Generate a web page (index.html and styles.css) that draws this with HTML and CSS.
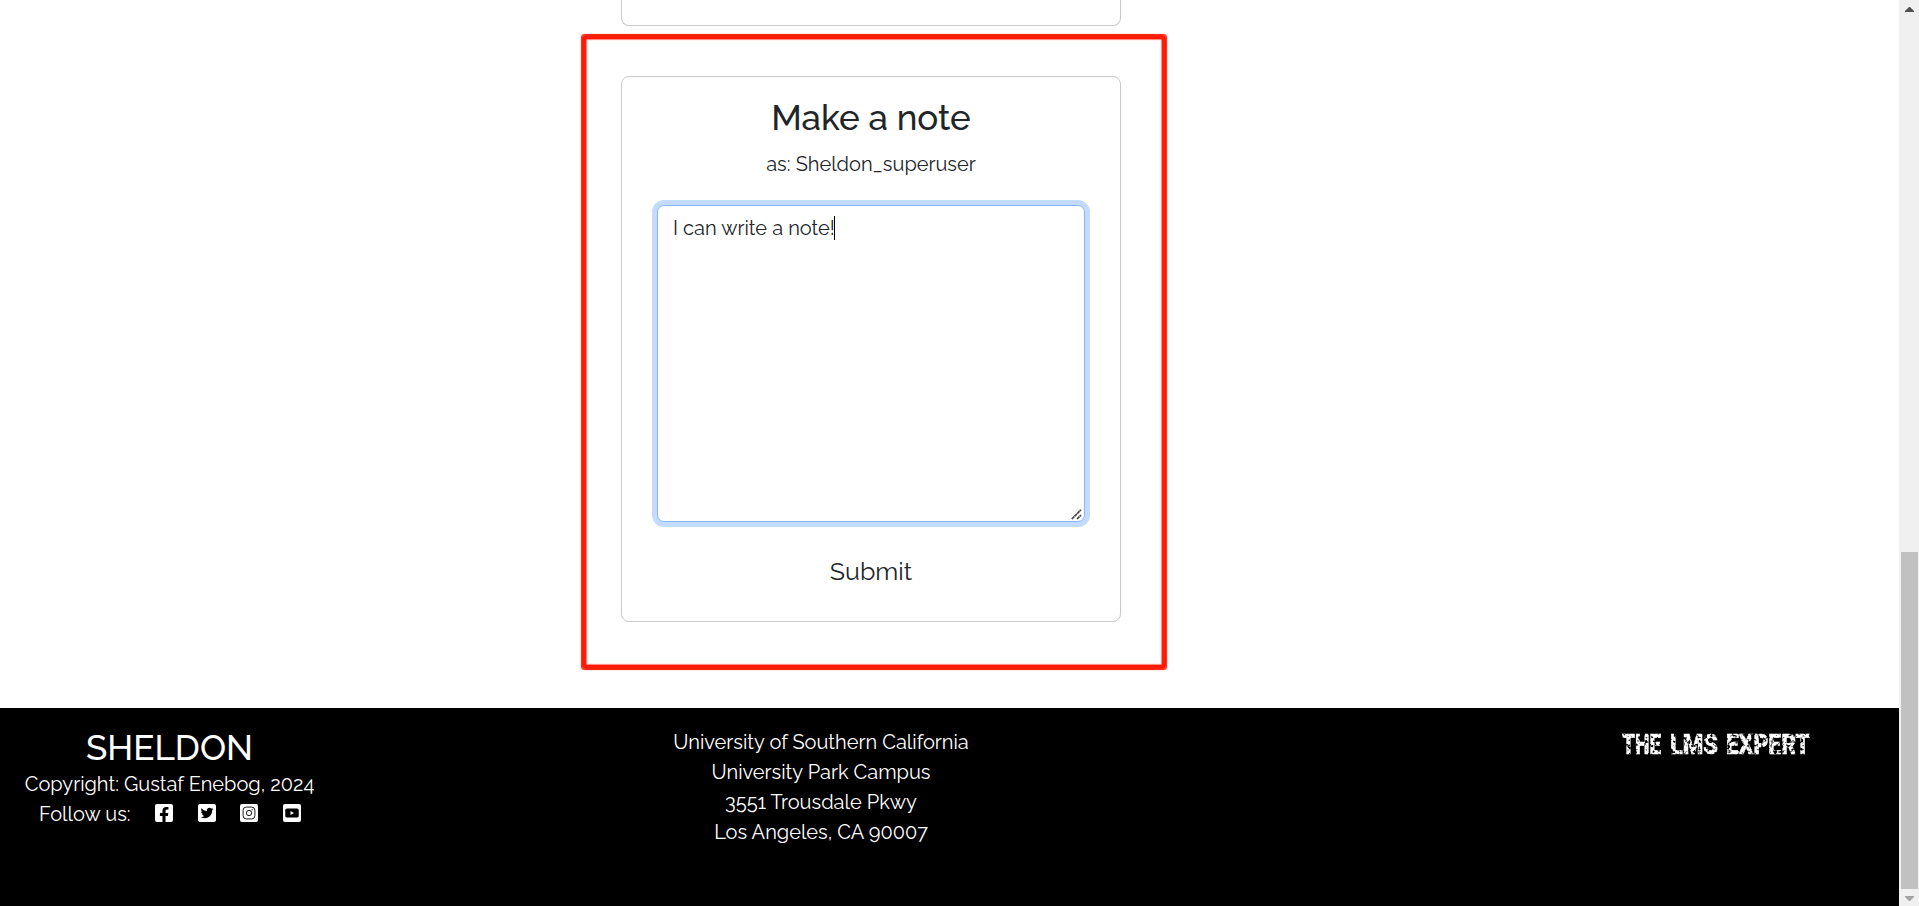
FILE: index.html
```html
<!DOCTYPE html>
<html lang="en">
<head>
<meta charset="utf-8">
<title>Sheldon</title>
<link rel="stylesheet" href="styles.css">
</head>
<body>
<div class="window">
  <div class="page">
    <main class="content">
      <section class="card card-previous"></section>
      <section class="card note-card">
        <h2 class="note-title">Make a note</h2>
        <p class="note-author">as: Sheldon_superuser</p>
        <div class="note-field">
          <textarea class="note-input" spellcheck="false">I can write a note!</textarea>
          <span class="caret"></span>
          <svg class="grip" viewBox="0 0 11 11"><path d="M.8 10 10 .8M6 10l4-4" fill="none" stroke="#444" stroke-width="1.7" stroke-dasharray="3.4 .4"/></svg>
        </div>
        <button class="submit">Submit</button>
      </section>
      <div class="highlight"></div>
    </main>
    <footer class="footer">
      <div class="brand">
        <h3 class="brand-name">SHELDON</h3>
        <p class="copyright">Copyright: Gustaf Enebog, 2024</p>
        <div class="social">
          <span class="social-label">Follow us:</span>
          <svg class="icon" viewBox="0 32 448 448"><path fill="#fff" d="M400 32H48A48 48 0 0 0 0 80v352a48 48 0 0 0 48 48h137.25V327.69h-63V256h63v-54.64c0-62.15 37-96.48 93.67-96.48 27.14 0 55.52 4.84 55.52 4.84v61h-31.27c-30.81 0-40.42 19.12-40.42 38.73V256h68.78l-11 71.69h-57.78V480H400a48 48 0 0 0 48-48V80a48 48 0 0 0-48-48z"/></svg>
          <svg class="icon" viewBox="0 32 448 448"><path fill="#fff" d="M400 32H48C21.5 32 0 53.5 0 80v352c0 26.5 21.5 48 48 48h352c26.5 0 48-21.5 48-48V80c0-26.5-21.5-48-48-48zm-48.9 158.8c.2 2.8.2 5.7.2 8.5 0 86.7-66 186.6-186.6 186.6-37.2 0-71.7-10.8-100.7-29.4 5.3.6 10.4.8 15.8.8 30.7 0 58.9-10.4 81.4-28-28.8-.6-53-19.5-61.3-45.5 10.1 1.5 19.2 1.5 29.6-1.2-30-6.1-52.5-32.5-52.5-64.4v-.8c8.7 4.9 18.9 7.9 29.6 8.3a65.447 65.447 0 0 1-29.2-54.6c0-12.2 3.2-23.4 8.9-33.1 32.3 39.8 80.8 65.8 135.2 68.6-9.3-44.5 24-80.6 64-80.6 18.9 0 35.9 7.9 47.9 20.7 14.8-2.8 29-8.3 41.6-15.8-4.9 15.2-15.2 28-28.8 36.1 13.2-1.4 26-5.1 37.8-10.2-8.9 13.1-20.1 24.7-32.9 34z"/></svg>
          <svg class="icon" viewBox="0 0 448 448"><rect width="448" height="448" rx="48" fill="#fff"/><g fill="none" stroke="#000" stroke-width="22"><rect x="77" y="77" width="294" height="294" rx="78"/><circle cx="224" cy="224" r="66"/></g><circle cx="302" cy="146" r="17"/></svg>
          <svg class="icon" viewBox="0 0 448 448"><rect width="448" height="448" rx="48" fill="#fff"/><rect x="56" y="110" width="336" height="228" rx="46"/><path d="M187 176v96l88-48z" fill="#fff"/></svg>
        </div>
      </div>
      <address class="address">
        <span>University of Southern California</span>
        <span>University Park Campus</span>
        <span>3551 Trousdale Pkwy</span>
        <span>Los Angeles, CA 90007</span>
      </address>
      <div class="partner">
        <svg class="partner-logo" viewBox="0 0 200 40">
          <defs>
            <filter id="worn" x="-2%" y="-10%" width="104%" height="120%">
              <feTurbulence type="fractalNoise" baseFrequency=".3" numOctaves="2" seed="11"/>
              <feColorMatrix values="0 0 0 0 0  0 0 0 0 0  0 0 0 0 0  0 0 0 -5 3.6" result="wear"/>
              <feComposite in="SourceGraphic" in2="wear" operator="in"/>
            </filter>
          </defs>
          <g class="partner-text" filter="url(#worn)">
            <text x="1" y="29.5" textLength="39" lengthAdjust="spacingAndGlyphs">THE</text>
            <text x="49" y="29.5" textLength="48" lengthAdjust="spacingAndGlyphs">LMS</text>
            <text x="105" y="29.5" textLength="84" lengthAdjust="spacingAndGlyphs">EXPERT</text>
          </g>
        </svg>
      </div>
    </footer>
  </div>
  <div class="scrollbar">
    <svg class="arrow" viewBox="0 0 9 5"><path d="M4 0h1L9 4v1H0V4z" fill="#505050"/></svg>
    <div class="thumb"></div>
    <svg class="arrow" viewBox="0 0 9 5"><path d="M0 0h9v1L5 5H4L0 1z" fill="#a3a3a3"/></svg>
  </div>
</div>
</body>
</html>
```

FILE: styles.css
```css
* { box-sizing: border-box; }
body {
  margin: 0;
  background: #fff;
  color: #212529;
  font: 20px/30px Raleway, Lato, sans-serif;
  overflow: hidden;
}
h2, h3, p { margin: 0; font-weight: 500; }
p { font-weight: 400; }
svg { display: block; }

.window { display: grid; grid-template-columns: 1899px 20px; height: 906px; }
.page { display: flex; flex-direction: column; }

.content { position: relative; height: 708px; padding-left: 621px; }
.card { width: 500px; border: 1px solid #cacaca; border-radius: 8px; text-align: center; }
.card-previous { height: 26px; border-top: 0; border-radius: 0 0 8px 8px; }
.note-card { height: 546px; margin-top: 50px; padding: 20px 35px 0; }
.note-title { font-size: 35px; line-height: 42px; }
.note-author { margin-top: 10px; }
.note-field { position: relative; height: 317px; margin-top: 26px; }
.note-input {
  display: block;
  width: 428px;
  height: 317px;
  padding: 7px 15px;
  border: 1px solid #86b7fe;
  border-radius: 7px;
  outline: 0;
  box-shadow: 0 0 0 5px #c2dbfe;
  color: #212529;
  font: inherit;
  resize: none;
}
.caret { position: absolute; left: 177px; top: 11px; width: 1px; height: 24px; background: #000; }
.grip { position: absolute; right: 3px; bottom: 2px; width: 11px; height: 11px; }
.submit {
  display: block;
  margin: 30px auto 0;
  padding: 0;
  border: 0;
  background: none;
  color: #212529;
  font: 25px/38px Raleway, Lato, sans-serif;
}
.highlight {
  position: absolute;
  left: 582px;
  top: 35px;
  width: 584px;
  height: 634px;
  border: 4px solid #ff1c05;
  border-radius: 3px;
  box-shadow: 0 0 1px 0.5px #ff1c05, inset 0 0 1px 0.5px #ff1c05;
}

.footer {
  flex: 1;
  display: grid;
  grid-template-columns: 339px 964px 230px 366px;
  padding-top: 19px;
  background: #000;
  color: #fff;
  text-align: center;
}
.brand-name { font-size: 35px; line-height: 42px; }
.social { display: flex; align-items: center; padding-left: 38px; gap: 24.8px; }
.social-label { width: 92px; text-align: left; padding-left: 1px; white-space: nowrap; }
.icon { width: 18px; height: 18px; margin-bottom: 2px; }
.address { display: flex; flex-direction: column; font-style: normal; }
.partner { grid-column: 4; padding-left: 88px; margin-top: -3px; }
.partner-logo { width: 200px; height: 40px; }
.partner-text { fill: #fff; stroke: #fff; stroke-width: .5; font: 900 27px Roboto, sans-serif; }

.scrollbar {
  display: flex;
  flex-direction: column;
  align-items: center;
  padding: 7px 0 5px;
  background: #f0f0f0;
}
.arrow { width: 9px; height: 5px; }
.thumb { width: 17px; height: 337px; margin: 540px 0 7px; background: #c1c1c1; }
```
